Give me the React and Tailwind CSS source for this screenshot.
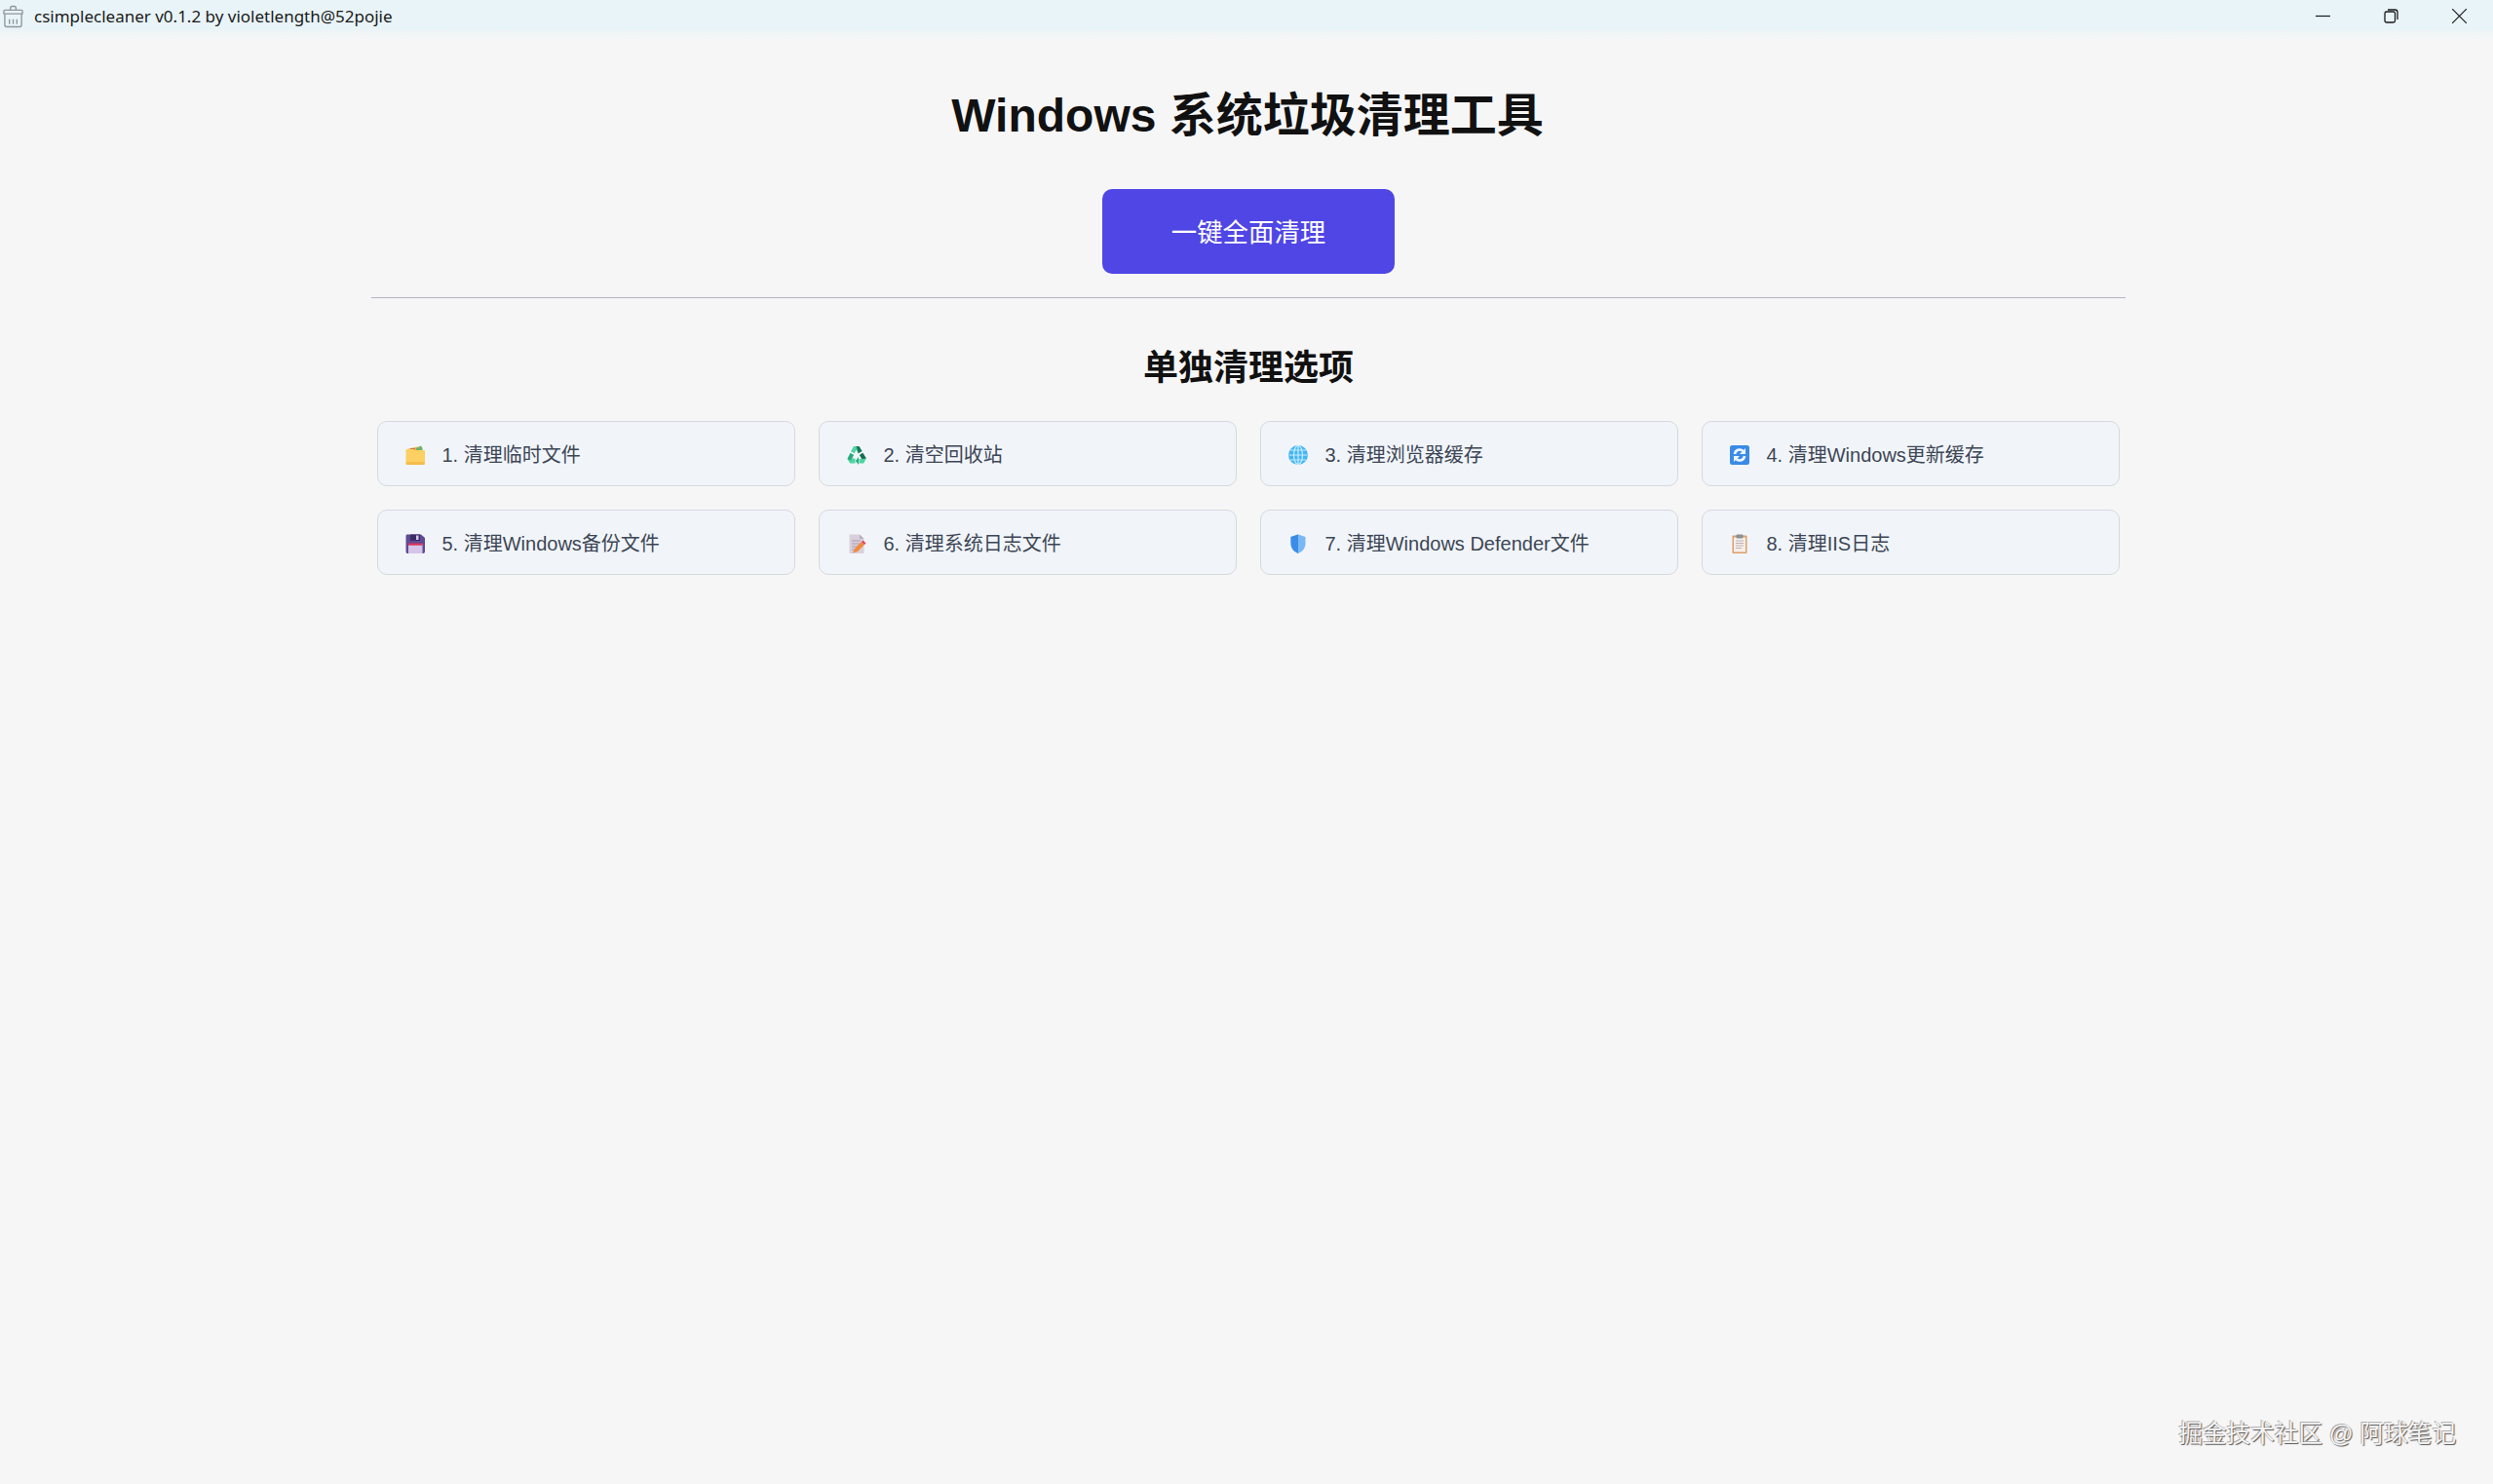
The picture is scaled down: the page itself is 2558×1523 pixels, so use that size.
const FONT = "font-['Liberation_Sans','Noto_Sans_CJK_SC',sans-serif]";

const Folder = () => (
  <svg viewBox="0 0 20 20" className="w-5 h-5">
    <path d="M3 3.5 L12 1.5 L16 2 L16 6 L3 6Z" fill="#e8b95a" />
    <path d="M11 3 L16 0.5 L17.5 3 L17.5 5 L11 5Z" fill="#6fb36a" />
    <rect x="5" y="3.2" width="5" height="1.2" fill="#d9663f" />
    <path d="M0.5 5 Q0.5 4 2 4 L8 4 L10 5 L19 5 Q20 5 20 6 L20 18 Q20 20 18 20 L2.5 20 Q0.5 20 0.5 18Z" fill="#fcd062" />
    <rect x="0.5" y="17" width="19.5" height="3" rx="1.5" fill="#f5bd4a" />
  </svg>
);
const Recycle = () => (
  <svg viewBox="0 0 20 20" className="w-5 h-5">
    <path d="M7 1 H12.5 L15.5 6 L11.7 8.3 L9.6 4.8 L7.6 8.3 L4 6.2Z" fill="#4ed3a2" />
    <path d="M9.6 1 H12.5 L15.5 6 L11.7 8.3Z" fill="#1c7657" />
    <path d="M3.5 8 L7 10 L5.2 13.5 H8.5 V18.5 H3.2 L0.5 14Z" fill="#4ed3a2" />
    <path d="M0.5 14 L3.5 8 L7 10 L4 15.5Z" fill="#2aa87c" />
    <path d="M16.3 7.8 L19.8 13.5 L17.2 18.5 H12.5 V14 H15.2 L13 10Z" fill="#4ed3a2" />
    <path d="M16.3 7.8 L19.8 13.5 L15.3 14 L13 10Z" fill="#186b4f" />
    <path d="M12 12 V20 L8.8 16Z" fill="#2aa87c" />
  </svg>
);
const Globe = () => (
  <svg viewBox="0 0 20 20" className="w-5 h-5">
    <circle cx="10" cy="10" r="10" fill="#45b6f4" />
    <g fill="none" stroke="#c6ecff" strokeWidth="1.2">
      <ellipse cx="10" cy="10" rx="4.5" ry="9.5" />
      <path d="M10 0.5V19.5M0.5 10H19.5M2 5H18M2 15H18" />
    </g>
  </svg>
);
const Refresh = () => (
  <svg viewBox="0 0 20 20" className="w-5 h-5">
    <rect width="20" height="20" rx="2.5" fill="#3a8ae6" />
    <path d="M5 9 A5 5 0 0 1 13.5 6" fill="none" stroke="#eef6ff" strokeWidth="2.6" />
    <path d="M16 3 V9 H10Z" fill="#eef6ff" />
    <path d="M15 11 A5 5 0 0 1 6.5 14" fill="none" stroke="#eef6ff" strokeWidth="2.6" />
    <path d="M4 17 V11 H10Z" fill="#eef6ff" />
  </svg>
);
const Floppy = () => (
  <svg viewBox="0 0 20 20" className="w-5 h-5">
    <path d="M1.5 0.5 H16 L20 4 V18 Q20 20 18 20 H2 Q0.5 20 0.5 18 V2 Q0.5 0.5 1.5 0.5Z" fill="#5f4a95" />
    <rect x="3" y="10" width="14.5" height="10" fill="#d5c6e8" />
    <rect x="3" y="9.5" width="14.5" height="2.2" fill="#d9345c" />
    <rect x="5" y="0.5" width="10" height="6.5" fill="#3a2d66" />
    <rect x="11" y="1.5" width="2.5" height="4.5" fill="#d5c6e8" />
  </svg>
);
const Memo = () => (
  <svg viewBox="0 0 20 20" className="w-5 h-5">
    <path d="M2.5 0.5 H13 L17.5 5 V20 H2.5Z" fill="#d9d0dc" />
    <path d="M13 0.5 L17.5 5 H13Z" fill="#b9adc0" />
    <path d="M5 7H14M5 10H14M5 13H11M5 16H8" stroke="#a99bb0" strokeWidth="1" />
    <path d="M6 19.5 L8 15 L15 8 L18 11 L11 18Z" fill="#f08a3c" />
    <path d="M15 8 L16.5 6.5 L19.5 9.5 L18 11Z" fill="#e8405a" />
  </svg>
);
const Shield = () => (
  <svg viewBox="0 0 20 20" className="w-5 h-5">
    <path d="M10 0.5 L17.5 3 V10 Q17.5 16.5 10 20 Q2.5 16.5 2.5 10 V3Z" fill="#7ab8f5" />
    <path d="M10 0.5 L2.5 3 V10 Q2.5 16.5 10 20Z" fill="#3b8ce8" />
  </svg>
);
const Clipboard = () => (
  <svg viewBox="0 0 20 20" className="w-5 h-5">
    <rect x="2.5" y="1.5" width="15" height="18.5" rx="1" fill="#dba06a" />
    <rect x="4" y="3.5" width="12" height="15" fill="#f7eeea" />
    <rect x="6.5" y="0.5" width="7" height="4" rx="1" fill="#8a8f98" />
    <path d="M6 7H14M6 9.5H14M6 12H14M6 14.5H12" stroke="#b9b1b4" strokeWidth="1" />
  </svg>
);

const items = [
  ["1. 清理临时文件", Folder],
  ["2. 清空回收站", Recycle],
  ["3. 清理浏览器缓存", Globe],
  ["4. 清理Windows更新缓存", Refresh],
  ["5. 清理Windows备份文件", Floppy],
  ["6. 清理系统日志文件", Memo],
  ["7. 清理Windows Defender文件", Shield],
  ["8. 清理IIS日志", Clipboard],
];

export default function App() {
  return (
    <div className={`relative h-screen overflow-hidden bg-[#f6f6f7] ${FONT}`}>
      <div className="h-[42px] bg-[linear-gradient(to_bottom,#e9f4f8_0,#e9f4f8_30px,#f1f5f6_34px,#f6f6f7_42px)]">
        <div className="flex h-[34px] items-center pr-[27px]">
          <svg viewBox="0 0 22 24" className="ml-[3px] h-[24px] w-[21px]" fill="none" stroke="#8f959b" strokeWidth="1.4">
            <path d="M8 5 V2.5 Q8 1 9.5 1 H12.5 Q14 1 14 2.5 V5" />
            <path d="M1 6 Q1 5 2 5 H20 Q21 5 21 6 V9 H1Z" />
            <path d="M2 9 V21 Q2 23 4 23 H18 Q20 23 20 21 V9" />
            <path d="M7 15V20M11 15V20M15 15V20" />
          </svg>
          <span className="ml-[11px] text-[17px] text-[#1a1a1a] font-['Noto_Sans',sans-serif]">csimplecleaner v0.1.2 by violetlength@52pojie</span>
          <div className="ml-auto mt-[-2px] flex items-center gap-[55px]">
            <svg viewBox="0 0 15 15" className="h-[15px] w-[15px]" fill="none" stroke="#1a1a1a" strokeWidth="1.2"><path d="M0 7.5H15" /></svg>
            <svg viewBox="0 0 15 15" className="h-[15px] w-[15px]" fill="none" stroke="#1a1a1a" strokeWidth="1.3">
              <rect x="1" y="3" width="10.5" height="11" rx="1.8" />
              <path d="M4 1 H11.5 Q14 1 14 3.5 V11" />
            </svg>
            <svg viewBox="0 0 15 15" className="h-[15px] w-[15px]" fill="none" stroke="#1a1a1a" strokeWidth="1.2"><path d="M0 0L15 15M15 0L0 15" /></svg>
          </div>
        </div>
      </div>

      <main className="flex flex-col items-center pl-[381px] pr-[377px]">
        <h1 className="mt-[49px] mr-[2px] text-[48px] leading-[56px] font-bold text-[#111111]">Windows 系统垃圾清理工具</h1>
        <button className="mt-[47px] h-[87px] w-[300px] rounded-[10px] bg-[#4f46e5] pt-[4px] text-[26.4px] text-white">一键全面清理</button>
        <div className="mt-[24px] h-px w-full bg-[#b5b5bd]" />
        <h2 className="mt-[50px] text-[36px] leading-[44px] font-bold text-[#111111]">单独清理选项</h2>
        <div className="mt-[32px] grid w-full grid-cols-4 gap-6 px-[6px]">
          {items.map(([label, Icon]) => (
            <button key={label} className="flex h-[67px] items-center gap-[17.5px] rounded-[10px] border border-[#d5d9de] bg-[#f1f5f9] pl-[28px] pt-[3px] text-left text-[20px] text-[#3d4656]">
              <Icon />
              <span>{label}</span>
            </button>
          ))}
        </div>
      </main>

      <div className="absolute bottom-[32px] right-[38px] text-[24.6px] text-[#f4f4f4] [text-shadow:1px_1px_1px_#555,-1px_-1px_0_#b0b0b0]">掘金技术社区 @ 阿球笔记</div>
    </div>
  );
}
